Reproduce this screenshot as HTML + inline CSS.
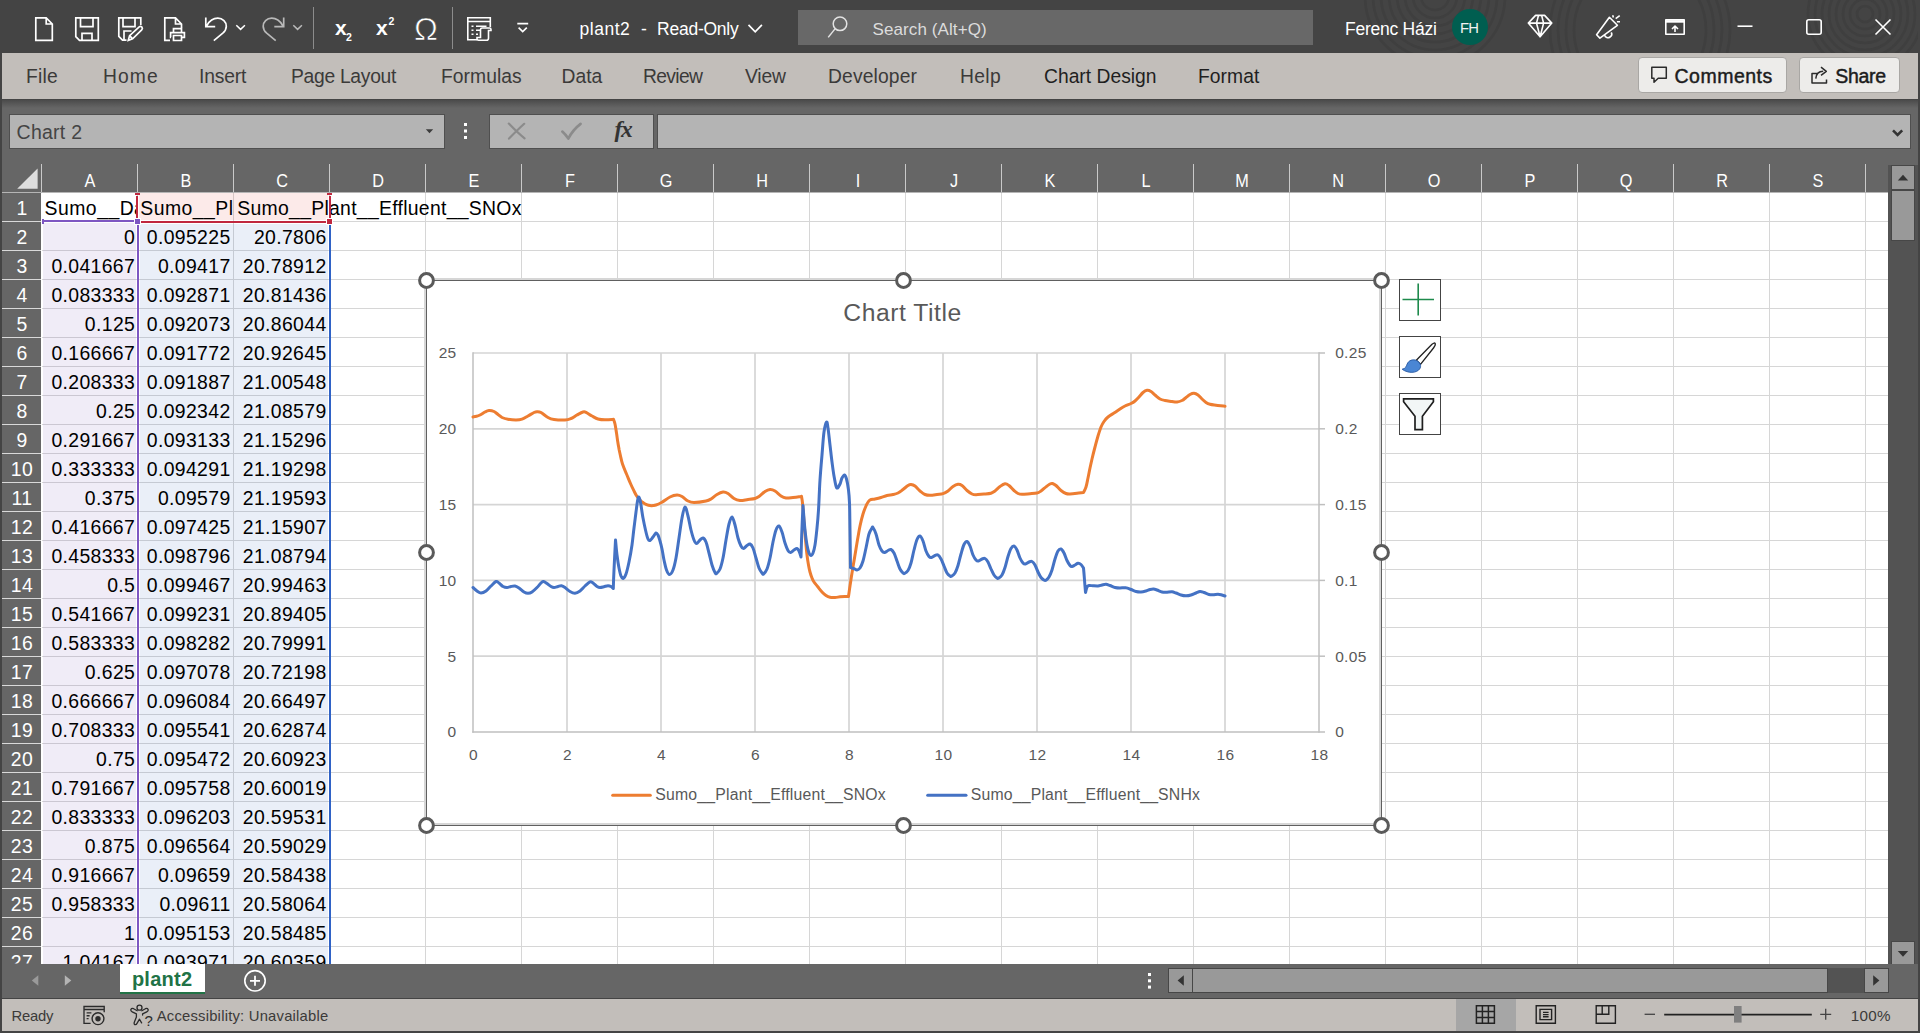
<!DOCTYPE html>
<html lang="en"><head><meta charset="utf-8"><title>plant2 - Read-Only - Excel</title>
<style>
*{margin:0;padding:0;box-sizing:border-box}
html,body{width:1920px;height:1033px;overflow:hidden;background:#666}
body{position:relative;font-family:"Liberation Sans",sans-serif;color:#000}
.a{position:absolute}
.t{position:absolute;white-space:pre;line-height:1em;display:block}
svg{position:absolute;overflow:visible}
#titlebar{left:0;top:0;width:1920px;height:53px;background:#444}
#ribbon{left:2px;top:53px;width:1916px;height:46px;background:#c2beba}
#ribshadow{left:2px;top:99px;width:1916px;height:9px;background:linear-gradient(#404040,#4c4c4c 15%,#666)}
.edge{background:#444}
.box{background:#b4b4b4;border:1px solid #4f4f4f}
.btn{background:#edecea;border:1px solid #a9a7a4;border-radius:4px}
#sheet{left:42px;top:193px;width:1846px;height:771px;background:#fff;overflow:hidden}
#grid{left:0;top:0;width:1846px;height:771px;
 background-image:linear-gradient(90deg,transparent 95px,#d6d6d6 95px),linear-gradient(transparent 28px,#d6d6d6 28px);
 background-size:96px 29px,96px 29px}
#colhdr{left:2px;top:164px;width:1886px;height:29px;background:#666;overflow:hidden}
#rowhdr{left:2px;top:193px;width:39px;height:771px;background:#666;overflow:hidden;border-right:0}
#rowgap{left:41px;top:193px;width:1px;height:771px;background:#fff}
.csep{position:absolute;top:0;width:1px;height:28px;background:#c9c9c9}
.rsep{position:absolute;left:0;width:39px;height:1px;background:#d9d9d9}
#tabbar{left:2px;top:964px;width:1916px;height:34px;background:#666}
#status{left:2px;top:999px;width:1916px;height:32px;background:#c2beba}
.sb{background:#999;border:1px solid #474747}
#chart{left:426px;top:280px;width:956px;height:546px;background:#fff;border:1px solid #606060}
#chartglow{left:424px;top:278px;width:957px;height:547px;border:2px solid #d6d6d6}
.cbtn{position:absolute;left:1399px;width:42px;height:42px;background:#fff;border:1px solid #444}

</style></head>
<body>
<div id="titlebar" class="a"></div>
<svg class="a" style="left:30px;top:10px" width="230" height="36" viewBox="30 10 230 36" fill="none" stroke="#fff" stroke-width="1.7" stroke-linejoin="miter"><path d="M35.8 17.8H46.2L52.3 24V40.3H35.8Z M46.2 17.8V24H52.3"/><path d="M75.8 17.8H98.3V40.3H79.5L75.8 36.6Z M80.5 17.8V26.6H93V17.8 M82 40.3V33.4H92V40.3"/><path d="M140.8 25V17.8H118.8V36.4L122.5 40.2H126.5 M123 17.8V26.6H135V17.8 M124 39.5V31H131.5"/><path d="M128.3 40.3L129.6 35.6L139.2 26.8Q140.6 25.7 141.9 27.1Q143 28.5 141.7 29.8L132.6 38.8Z M129.6 35.6L132.6 38.8"/><path d="M170 40.3H164.8V17.8H175.5L181.5 24V28 M175.5 17.8V24H181.5"/><path d="M173.5 32.5V28.6H181.5V32.5 M171 37.3H170.6V32.6H184.4V37.3H182 M173.5 35.5H181.5V40.5H173.5Z"/><path d="M205.8 17.5V26.6H215.2 M206.8 25.6C209.5 20.8 213.5 18.2 217.8 18.2C222.8 18.2 226.3 21.8 226.3 26.2C226.3 29.2 225 31.3 222.8 33.2L213.8 40.6"/><path d="M236.3 25.2L240.6 29.4L244.9 25.2" stroke-width="1.5"/></svg>
<svg class="a" style="left:260px;top:10px" width="50" height="36" viewBox="260 10 50 36" fill="none" stroke="#b9b9b9" stroke-width="1.7"><path d="M283.7 17.5V26.6H274.3 M282.7 25.6C280 20.8 276 18.2 271.7 18.2C266.7 18.2 263.2 21.8 263.2 26.2C263.2 29.2 264.5 31.3 266.7 33.2L275.7 40.6"/><path d="M293.3 25.2L297.6 29.4L301.9 25.2" stroke-width="1.5"/></svg>
<div class="a" style="left:313px;top:7px;width:1px;height:42px;background:#8c8c8c"></div>
<div class="a" style="left:452px;top:7px;width:1px;height:42px;background:#8c8c8c"></div>
<span id="t0" class="t " style="left:335.00px;top:17.00px;font-size:21px;color:#fff;font-weight:700;letter-spacing:0.000px;">x</span>
<span id="t1" class="t " style="left:346.00px;top:32.00px;font-size:10.5px;color:#fff;font-weight:700;letter-spacing:0.000px;">2</span>
<span id="t2" class="t " style="left:376.00px;top:17.00px;font-size:21px;color:#fff;font-weight:700;letter-spacing:0.000px;">x</span>
<span id="t3" class="t " style="left:388.50px;top:16.00px;font-size:10.5px;color:#fff;font-weight:700;letter-spacing:0.000px;">2</span>
<span id="t4" class="t " style="left:414.00px;top:13.00px;font-size:32px;color:#fff;font-weight:400;letter-spacing:0.000px;-webkit-text-stroke:0.7px #444;">Ω</span>
<svg class="a" style="left:460px;top:10px" width="75" height="36" viewBox="460 10 75 36" fill="none" stroke="#fff" stroke-width="1.6"><path d="M477 39.8H467.8V17.8H490.3V27 M467.8 21.5H490.3 M471.5 26.2H473.5 M476 26.2H486.5 M471.5 30.2H473.5 M476 30.2H480 M471.5 34.2H473.5 M476 34.2H478"/><path d="M480.5 37.5V29.6Q480.5 28 482.2 28H489.6Q491 28 491 29.5V30.5H488.5V38.2Q488.5 40.2 486.5 40.2H478.5Q477 40.2 477 38.8V37.5Z"/><path d="M517.3 23.6H528.2 M518.6 27.6L522.7 31.6L526.8 27.6" stroke-width="1.6"/></svg>
<span id="t5" class="t " style="left:579.50px;top:21.00px;font-size:17.5px;color:#fff;font-weight:400;letter-spacing:0.510px;">plant2</span>
<span id="t6" class="t " style="left:641.00px;top:21.00px;font-size:17.5px;color:#fff;font-weight:400;letter-spacing:0.000px;">-</span>
<span id="t7" class="t " style="left:657.00px;top:21.00px;font-size:17.5px;color:#fff;font-weight:400;letter-spacing:-0.237px;">Read-Only</span>
<svg class="a" style="left:745px;top:20px" width="20" height="16" viewBox="745 20 20 16" fill="none" ><path d="M748.5 24.8L755.2 31.8L761.9 24.8" stroke="#fff" stroke-width="1.7"/></svg>
<div class="a" style="left:798px;top:10px;width:515px;height:35px;background:#686868"></div>
<svg class="a" style="left:825px;top:14px" width="26" height="26" viewBox="825 14 26 26" fill="none" ><circle cx="840" cy="23.8" r="6.8" stroke="#e3e3e3" stroke-width="1.5"/><path d="M835 28.9L828.2 37.4" stroke="#e3e3e3" stroke-width="1.5"/></svg>
<span id="t8" class="t " style="left:872.50px;top:21.00px;font-size:17px;color:#dcdcdc;font-weight:400;letter-spacing:0.097px;">Search (Alt+Q)</span>
<svg class="a" style="left:1316px;top:0;overflow:hidden" width="604" height="53" viewBox="1316 0 604 53" fill="none" stroke="#3f3f3f" stroke-width="2.6"><circle cx="1435" cy="-4" r="14"/><circle cx="1435" cy="-4" r="22"/><circle cx="1435" cy="-4" r="30"/><circle cx="1435" cy="-4" r="38"/><circle cx="1435" cy="-4" r="46"/><circle cx="1435" cy="-4" r="54"/><circle cx="1435" cy="-4" r="62"/><circle cx="1435" cy="-4" r="70"/><circle cx="1640" cy="30" r="66"/><circle cx="1640" cy="30" r="74"/><circle cx="1640" cy="30" r="82"/><circle cx="1640" cy="30" r="90"/><circle cx="1865" cy="14" r="8"/><circle cx="1865" cy="14" r="15"/><circle cx="1865" cy="14" r="22"/><circle cx="1865" cy="14" r="29"/><circle cx="1865" cy="14" r="36"/><circle cx="1865" cy="14" r="43"/><circle cx="1865" cy="14" r="50"/><circle cx="1865" cy="14" r="57"/></svg>
<span id="t9" class="t " style="left:1345.00px;top:21.00px;font-size:17.5px;color:#fff;font-weight:400;letter-spacing:-0.245px;">Ferenc Házi</span>
<div class="a" style="left:1452px;top:9px;width:36px;height:36px;border-radius:50%;background:#005e50"></div>
<span id="t10" class="t " style="left:1459.90px;top:21.00px;font-size:14.8px;color:#f1f1f1;font-weight:400;letter-spacing:-0.639px;">FH</span>
<svg class="a" style="left:1520px;top:8px" width="400" height="36" viewBox="1520 8 400 36" fill="none" stroke="#fff" stroke-width="1.6" stroke-linejoin="round"><path d="M1535.6 15.4H1544.6L1551.8 23.1L1540.1 36.8L1528.3 23.1Z M1528.3 23.1H1551.8 M1538.5 15.4L1536.5 23.1L1540.1 36.8L1543.6 23.1L1541.6 15.4"/><path d="M1596.6 34.8L1609.4 17.3L1617.4 25.3L1599.9 38.1Z M1604.6 35C1605.2 37.6 1608 38.4 1610 37C1611.8 35.8 1612 33.6 1611.3 32.3"/><path d="M1612.7 15.2L1613.4 17.5 M1615.7 18.7L1619.7 15.6 M1616.9 21.7L1620 21.8"/><path d="M1665.8 19.8H1684.2V34.2H1665.8Z M1675 32V26.4 M1672 29L1675 26L1678 29"/><path d="M1665.8 21.4H1684.2" stroke-width="2.6"/><path d="M1737.5 26.2H1752.5"/><rect x="1806.8" y="19.8" width="14.4" height="14.4" rx="2"/><path d="M1875.5 19.5L1890.5 34.5 M1890.5 19.5L1875.5 34.5"/></svg>
<div id="ribbon" class="a"></div><div id="ribshadow" class="a"></div>
<span id="t11" class="t " style="left:26.00px;top:67.00px;font-size:19.3px;color:#3b3a39;font-weight:400;letter-spacing:0.218px;">File</span>
<span id="t12" class="t " style="left:103.00px;top:67.00px;font-size:19.3px;color:#3b3a39;font-weight:400;letter-spacing:1.097px;">Home</span>
<span id="t13" class="t " style="left:199.00px;top:67.00px;font-size:19.3px;color:#3b3a39;font-weight:400;letter-spacing:-0.173px;">Insert</span>
<span id="t14" class="t " style="left:291.00px;top:67.00px;font-size:19.3px;color:#3b3a39;font-weight:400;letter-spacing:-0.292px;">Page Layout</span>
<span id="t15" class="t " style="left:441.00px;top:67.00px;font-size:19.3px;color:#3b3a39;font-weight:400;letter-spacing:0.041px;">Formulas</span>
<span id="t16" class="t " style="left:561.50px;top:67.00px;font-size:19.3px;color:#3b3a39;font-weight:400;letter-spacing:-0.002px;">Data</span>
<span id="t17" class="t " style="left:643.00px;top:67.00px;font-size:19.3px;color:#3b3a39;font-weight:400;letter-spacing:-0.659px;">Review</span>
<span id="t18" class="t " style="left:745.00px;top:67.00px;font-size:19.3px;color:#3b3a39;font-weight:400;letter-spacing:-0.173px;">View</span>
<span id="t19" class="t " style="left:828.00px;top:67.00px;font-size:19.3px;color:#3b3a39;font-weight:400;letter-spacing:0.129px;">Developer</span>
<span id="t20" class="t " style="left:960.00px;top:67.00px;font-size:19.3px;color:#3b3a39;font-weight:400;letter-spacing:0.356px;">Help</span>
<span id="t21" class="t " style="left:1044.00px;top:67.00px;font-size:19.3px;color:#1f1f1f;font-weight:400;letter-spacing:-0.000px;">Chart Design</span>
<span id="t22" class="t " style="left:1198.00px;top:67.00px;font-size:19.3px;color:#1f1f1f;font-weight:400;letter-spacing:0.059px;">Format</span>
<div class="a btn" style="left:1638px;top:57px;width:149px;height:36px"></div>
<div class="a btn" style="left:1799px;top:57px;width:101px;height:36px"></div>
<svg class="a" style="left:1648px;top:64px" width="22" height="22" viewBox="1648 64 22 22" fill="none" ><path d="M1651.8 67.3H1666.3V78.3H1658.2L1654 82.2V78.3H1651.8Z" stroke="#2b2b2b" stroke-width="1.5" stroke-linejoin="round"/></svg>
<span id="t23" class="t " style="left:1674.50px;top:67.00px;font-size:19.5px;color:#1c1c1c;font-weight:400;letter-spacing:0.497px;-webkit-text-stroke:0.45px #1c1c1c;">Comments</span>
<svg class="a" style="left:1808px;top:64px" width="24" height="24" viewBox="1808 64 24 24" fill="none" ><path d="M1817.5 73.4H1812V83H1826.5V79.5 M1815.8 78.6C1816.2 73.6 1819 71.3 1823.2 71.2 M1821 67.2L1826.3 71.3L1821 75.4" stroke="#2b2b2b" stroke-width="1.5" stroke-linejoin="round"/></svg>
<span id="t24" class="t " style="left:1835.30px;top:67.00px;font-size:19.5px;color:#1c1c1c;font-weight:400;letter-spacing:-0.297px;-webkit-text-stroke:0.45px #1c1c1c;">Share</span>
<div class="a box" style="left:9px;top:114px;width:436px;height:35px"></div>
<span id="t25" class="t " style="left:16.60px;top:123.00px;font-size:19.5px;color:#444;font-weight:400;letter-spacing:0.250px;">Chart 2</span>
<svg class="a" style="left:424px;top:127px" width="12" height="8" viewBox="424 127 12 8" fill="none" ><path d="M425.8 129.2H433.2L429.5 133.2Z" fill="#3c3c3c"/></svg>
<div class="a" style="left:464px;top:123px;width:3px;height:3px;background:#fff;box-shadow:0 6.5px 0 #fff,0 13px 0 #fff"></div>
<div class="a box" style="left:489px;top:114px;width:165px;height:35px"></div>
<svg class="a" style="left:505px;top:120px" width="80" height="22" viewBox="505 120 80 22" fill="none" ><path d="M508.8 123.6C513 128 519 134 524.6 138.4 M524.2 123.8C519 128.5 514 133.5 509 138.6" stroke="#8b8b8b" stroke-width="2.2" stroke-linecap="round"/><path d="M562.3 131.6C564.5 133.5 566.5 136 568.3 138.6C571.5 132.5 575.5 127.8 580.6 123.9" stroke="#8b8b8b" stroke-width="2.6" stroke-linecap="round" stroke-linejoin="round"/></svg>
<span id="t26" class="t " style="left:614.50px;top:118.00px;font-size:23.5px;color:#333;font-weight:700;letter-spacing:-1.326px;font-family:'Liberation Serif',serif;font-style:italic;">fx</span>
<div class="a box" style="left:657px;top:114px;width:1254px;height:35px"></div>
<svg class="a" style="left:1890px;top:126px" width="16" height="14" viewBox="1890 126 16 14" fill="none" ><path d="M1893 130.3L1897.6 134.9L1902.2 130.3" stroke="#333" stroke-width="2.6"/></svg>
<div class="a edge" style="left:0;top:0;width:2px;height:1033px"></div><div class="a edge" style="left:1918px;top:0;width:2px;height:1033px"></div><div class="a edge" style="left:0;top:1031px;width:1920px;height:2px"></div>
<div id="colhdr" class="a"><i class="csep" style="left:39px"></i><i class="csep" style="left:135px"></i><i class="csep" style="left:231px"></i><i class="csep" style="left:327px"></i><i class="csep" style="left:423px"></i><i class="csep" style="left:519px"></i><i class="csep" style="left:615px"></i><i class="csep" style="left:711px"></i><i class="csep" style="left:807px"></i><i class="csep" style="left:903px"></i><i class="csep" style="left:999px"></i><i class="csep" style="left:1095px"></i><i class="csep" style="left:1191px"></i><i class="csep" style="left:1287px"></i><i class="csep" style="left:1383px"></i><i class="csep" style="left:1479px"></i><i class="csep" style="left:1575px"></i><i class="csep" style="left:1671px"></i><i class="csep" style="left:1767px"></i><i class="csep" style="left:1863px"></i><i class="a" style="left:0;top:28px;width:1886px;height:1px;background:#b5b5b5"></i></div>
<svg class="a" style="left:15px;top:166px" width="26" height="26" viewBox="15 166 26 26" fill="none" ><path d="M37.6 168.4V188.8H17.2Z" fill="#dedede"/></svg>
<span class="t" style="left:30.10px;top:172.00px;width:120px;text-align:center;font-size:18.7px;color:#fff;font-weight:400;letter-spacing:0.000px;transform:scaleX(.87);">A</span>
<span class="t" style="left:126.10px;top:172.00px;width:120px;text-align:center;font-size:18.7px;color:#fff;font-weight:400;letter-spacing:0.000px;transform:scaleX(.87);">B</span>
<span class="t" style="left:222.10px;top:172.00px;width:120px;text-align:center;font-size:18.7px;color:#fff;font-weight:400;letter-spacing:0.000px;transform:scaleX(.87);">C</span>
<span class="t" style="left:318.10px;top:172.00px;width:120px;text-align:center;font-size:18.7px;color:#fff;font-weight:400;letter-spacing:0.000px;transform:scaleX(.87);">D</span>
<span class="t" style="left:414.10px;top:172.00px;width:120px;text-align:center;font-size:18.7px;color:#fff;font-weight:400;letter-spacing:0.000px;transform:scaleX(.87);">E</span>
<span class="t" style="left:510.10px;top:172.00px;width:120px;text-align:center;font-size:18.7px;color:#fff;font-weight:400;letter-spacing:0.000px;transform:scaleX(.87);">F</span>
<span class="t" style="left:606.10px;top:172.00px;width:120px;text-align:center;font-size:18.7px;color:#fff;font-weight:400;letter-spacing:0.000px;transform:scaleX(.87);">G</span>
<span class="t" style="left:702.10px;top:172.00px;width:120px;text-align:center;font-size:18.7px;color:#fff;font-weight:400;letter-spacing:0.000px;transform:scaleX(.87);">H</span>
<span class="t" style="left:798.10px;top:172.00px;width:120px;text-align:center;font-size:18.7px;color:#fff;font-weight:400;letter-spacing:0.000px;transform:scaleX(.87);">I</span>
<span class="t" style="left:894.10px;top:172.00px;width:120px;text-align:center;font-size:18.7px;color:#fff;font-weight:400;letter-spacing:0.000px;transform:scaleX(.87);">J</span>
<span class="t" style="left:990.10px;top:172.00px;width:120px;text-align:center;font-size:18.7px;color:#fff;font-weight:400;letter-spacing:0.000px;transform:scaleX(.87);">K</span>
<span class="t" style="left:1086.10px;top:172.00px;width:120px;text-align:center;font-size:18.7px;color:#fff;font-weight:400;letter-spacing:0.000px;transform:scaleX(.87);">L</span>
<span class="t" style="left:1182.10px;top:172.00px;width:120px;text-align:center;font-size:18.7px;color:#fff;font-weight:400;letter-spacing:0.000px;transform:scaleX(.87);">M</span>
<span class="t" style="left:1278.10px;top:172.00px;width:120px;text-align:center;font-size:18.7px;color:#fff;font-weight:400;letter-spacing:0.000px;transform:scaleX(.87);">N</span>
<span class="t" style="left:1374.10px;top:172.00px;width:120px;text-align:center;font-size:18.7px;color:#fff;font-weight:400;letter-spacing:0.000px;transform:scaleX(.87);">O</span>
<span class="t" style="left:1470.10px;top:172.00px;width:120px;text-align:center;font-size:18.7px;color:#fff;font-weight:400;letter-spacing:0.000px;transform:scaleX(.87);">P</span>
<span class="t" style="left:1566.10px;top:172.00px;width:120px;text-align:center;font-size:18.7px;color:#fff;font-weight:400;letter-spacing:0.000px;transform:scaleX(.87);">Q</span>
<span class="t" style="left:1662.10px;top:172.00px;width:120px;text-align:center;font-size:18.7px;color:#fff;font-weight:400;letter-spacing:0.000px;transform:scaleX(.87);">R</span>
<span class="t" style="left:1758.10px;top:172.00px;width:120px;text-align:center;font-size:18.7px;color:#fff;font-weight:400;letter-spacing:0.000px;transform:scaleX(.87);">S</span>
<div id="rowhdr" class="a"><i class="rsep" style="top:28px"></i><i class="rsep" style="top:57px"></i><i class="rsep" style="top:86px"></i><i class="rsep" style="top:115px"></i><i class="rsep" style="top:144px"></i><i class="rsep" style="top:173px"></i><i class="rsep" style="top:202px"></i><i class="rsep" style="top:231px"></i><i class="rsep" style="top:260px"></i><i class="rsep" style="top:289px"></i><i class="rsep" style="top:318px"></i><i class="rsep" style="top:347px"></i><i class="rsep" style="top:376px"></i><i class="rsep" style="top:405px"></i><i class="rsep" style="top:434px"></i><i class="rsep" style="top:463px"></i><i class="rsep" style="top:492px"></i><i class="rsep" style="top:521px"></i><i class="rsep" style="top:550px"></i><i class="rsep" style="top:579px"></i><i class="rsep" style="top:608px"></i><i class="rsep" style="top:637px"></i><i class="rsep" style="top:666px"></i><i class="rsep" style="top:695px"></i><i class="rsep" style="top:724px"></i><i class="rsep" style="top:753px"></i><i class="rsep" style="top:782px"></i></div><div id="rowgap" class="a"></div>
<span class="t" style="left:-38.02px;top:199.00px;width:120px;text-align:center;font-size:19.4px;color:#fff;font-weight:400;letter-spacing:0.360px;clip-path:inset(0 0 0px 0);">1</span>
<span class="t" style="left:-38.02px;top:228.00px;width:120px;text-align:center;font-size:19.4px;color:#fff;font-weight:400;letter-spacing:0.360px;clip-path:inset(0 0 0px 0);">2</span>
<span class="t" style="left:-38.02px;top:257.00px;width:120px;text-align:center;font-size:19.4px;color:#fff;font-weight:400;letter-spacing:0.360px;clip-path:inset(0 0 0px 0);">3</span>
<span class="t" style="left:-38.02px;top:286.00px;width:120px;text-align:center;font-size:19.4px;color:#fff;font-weight:400;letter-spacing:0.360px;clip-path:inset(0 0 0px 0);">4</span>
<span class="t" style="left:-38.02px;top:315.00px;width:120px;text-align:center;font-size:19.4px;color:#fff;font-weight:400;letter-spacing:0.360px;clip-path:inset(0 0 0px 0);">5</span>
<span class="t" style="left:-38.02px;top:344.00px;width:120px;text-align:center;font-size:19.4px;color:#fff;font-weight:400;letter-spacing:0.360px;clip-path:inset(0 0 0px 0);">6</span>
<span class="t" style="left:-38.02px;top:373.00px;width:120px;text-align:center;font-size:19.4px;color:#fff;font-weight:400;letter-spacing:0.360px;clip-path:inset(0 0 0px 0);">7</span>
<span class="t" style="left:-38.02px;top:402.00px;width:120px;text-align:center;font-size:19.4px;color:#fff;font-weight:400;letter-spacing:0.360px;clip-path:inset(0 0 0px 0);">8</span>
<span class="t" style="left:-38.02px;top:431.00px;width:120px;text-align:center;font-size:19.4px;color:#fff;font-weight:400;letter-spacing:0.360px;clip-path:inset(0 0 0px 0);">9</span>
<span class="t" style="left:-38.02px;top:460.00px;width:120px;text-align:center;font-size:19.4px;color:#fff;font-weight:400;letter-spacing:0.360px;clip-path:inset(0 0 0px 0);">10</span>
<span class="t" style="left:-38.02px;top:489.00px;width:120px;text-align:center;font-size:19.4px;color:#fff;font-weight:400;letter-spacing:0.360px;clip-path:inset(0 0 0px 0);">11</span>
<span class="t" style="left:-38.02px;top:518.00px;width:120px;text-align:center;font-size:19.4px;color:#fff;font-weight:400;letter-spacing:0.360px;clip-path:inset(0 0 0px 0);">12</span>
<span class="t" style="left:-38.02px;top:547.00px;width:120px;text-align:center;font-size:19.4px;color:#fff;font-weight:400;letter-spacing:0.360px;clip-path:inset(0 0 0px 0);">13</span>
<span class="t" style="left:-38.02px;top:576.00px;width:120px;text-align:center;font-size:19.4px;color:#fff;font-weight:400;letter-spacing:0.360px;clip-path:inset(0 0 0px 0);">14</span>
<span class="t" style="left:-38.02px;top:605.00px;width:120px;text-align:center;font-size:19.4px;color:#fff;font-weight:400;letter-spacing:0.360px;clip-path:inset(0 0 0px 0);">15</span>
<span class="t" style="left:-38.02px;top:634.00px;width:120px;text-align:center;font-size:19.4px;color:#fff;font-weight:400;letter-spacing:0.360px;clip-path:inset(0 0 0px 0);">16</span>
<span class="t" style="left:-38.02px;top:663.00px;width:120px;text-align:center;font-size:19.4px;color:#fff;font-weight:400;letter-spacing:0.360px;clip-path:inset(0 0 0px 0);">17</span>
<span class="t" style="left:-38.02px;top:692.00px;width:120px;text-align:center;font-size:19.4px;color:#fff;font-weight:400;letter-spacing:0.360px;clip-path:inset(0 0 0px 0);">18</span>
<span class="t" style="left:-38.02px;top:721.00px;width:120px;text-align:center;font-size:19.4px;color:#fff;font-weight:400;letter-spacing:0.360px;clip-path:inset(0 0 0px 0);">19</span>
<span class="t" style="left:-38.02px;top:750.00px;width:120px;text-align:center;font-size:19.4px;color:#fff;font-weight:400;letter-spacing:0.360px;clip-path:inset(0 0 0px 0);">20</span>
<span class="t" style="left:-38.02px;top:779.00px;width:120px;text-align:center;font-size:19.4px;color:#fff;font-weight:400;letter-spacing:0.360px;clip-path:inset(0 0 0px 0);">21</span>
<span class="t" style="left:-38.02px;top:808.00px;width:120px;text-align:center;font-size:19.4px;color:#fff;font-weight:400;letter-spacing:0.360px;clip-path:inset(0 0 0px 0);">22</span>
<span class="t" style="left:-38.02px;top:837.00px;width:120px;text-align:center;font-size:19.4px;color:#fff;font-weight:400;letter-spacing:0.360px;clip-path:inset(0 0 0px 0);">23</span>
<span class="t" style="left:-38.02px;top:866.00px;width:120px;text-align:center;font-size:19.4px;color:#fff;font-weight:400;letter-spacing:0.360px;clip-path:inset(0 0 0px 0);">24</span>
<span class="t" style="left:-38.02px;top:895.00px;width:120px;text-align:center;font-size:19.4px;color:#fff;font-weight:400;letter-spacing:0.360px;clip-path:inset(0 0 0px 0);">25</span>
<span class="t" style="left:-38.02px;top:924.00px;width:120px;text-align:center;font-size:19.4px;color:#fff;font-weight:400;letter-spacing:0.360px;clip-path:inset(0 0 0px 0);">26</span>
<span class="t" style="left:-38.02px;top:953.00px;width:120px;text-align:center;font-size:19.4px;color:#fff;font-weight:400;letter-spacing:0.360px;clip-path:inset(0 0 9px 0);">27</span>
<div id="sheet" class="a"><div id="grid" class="a"></div><div class="a" style="left:1px;top:30px;width:93px;height:741px;background:rgba(112,72,180,.10)"></div><div class="a" style="left:98px;top:31px;width:188px;height:740px;background:rgba(68,114,196,.115)"></div><div class="a" style="left:97px;top:0;width:189px;height:27px;background:rgba(225,70,60,.115)"></div><span class="t" style="left:-106.84px;top:35.00px;width:200px;text-align:right;font-size:19.4px;color:#000;font-weight:400;letter-spacing:0.360px;">0</span><span class="t" style="left:-11.44px;top:35.00px;width:200px;text-align:right;font-size:19.4px;color:#000;font-weight:400;letter-spacing:0.360px;">0.095225</span><span class="t" style="left:84.56px;top:35.00px;width:200px;text-align:right;font-size:19.4px;color:#000;font-weight:400;letter-spacing:0.360px;">20.7806</span><span class="t" style="left:-106.84px;top:64.00px;width:200px;text-align:right;font-size:19.4px;color:#000;font-weight:400;letter-spacing:0.360px;">0.041667</span><span class="t" style="left:-11.44px;top:64.00px;width:200px;text-align:right;font-size:19.4px;color:#000;font-weight:400;letter-spacing:0.360px;">0.09417</span><span class="t" style="left:84.56px;top:64.00px;width:200px;text-align:right;font-size:19.4px;color:#000;font-weight:400;letter-spacing:0.360px;">20.78912</span><span class="t" style="left:-106.84px;top:93.00px;width:200px;text-align:right;font-size:19.4px;color:#000;font-weight:400;letter-spacing:0.360px;">0.083333</span><span class="t" style="left:-11.44px;top:93.00px;width:200px;text-align:right;font-size:19.4px;color:#000;font-weight:400;letter-spacing:0.360px;">0.092871</span><span class="t" style="left:84.56px;top:93.00px;width:200px;text-align:right;font-size:19.4px;color:#000;font-weight:400;letter-spacing:0.360px;">20.81436</span><span class="t" style="left:-106.84px;top:122.00px;width:200px;text-align:right;font-size:19.4px;color:#000;font-weight:400;letter-spacing:0.360px;">0.125</span><span class="t" style="left:-11.44px;top:122.00px;width:200px;text-align:right;font-size:19.4px;color:#000;font-weight:400;letter-spacing:0.360px;">0.092073</span><span class="t" style="left:84.56px;top:122.00px;width:200px;text-align:right;font-size:19.4px;color:#000;font-weight:400;letter-spacing:0.360px;">20.86044</span><span class="t" style="left:-106.84px;top:151.00px;width:200px;text-align:right;font-size:19.4px;color:#000;font-weight:400;letter-spacing:0.360px;">0.166667</span><span class="t" style="left:-11.44px;top:151.00px;width:200px;text-align:right;font-size:19.4px;color:#000;font-weight:400;letter-spacing:0.360px;">0.091772</span><span class="t" style="left:84.56px;top:151.00px;width:200px;text-align:right;font-size:19.4px;color:#000;font-weight:400;letter-spacing:0.360px;">20.92645</span><span class="t" style="left:-106.84px;top:180.00px;width:200px;text-align:right;font-size:19.4px;color:#000;font-weight:400;letter-spacing:0.360px;">0.208333</span><span class="t" style="left:-11.44px;top:180.00px;width:200px;text-align:right;font-size:19.4px;color:#000;font-weight:400;letter-spacing:0.360px;">0.091887</span><span class="t" style="left:84.56px;top:180.00px;width:200px;text-align:right;font-size:19.4px;color:#000;font-weight:400;letter-spacing:0.360px;">21.00548</span><span class="t" style="left:-106.84px;top:209.00px;width:200px;text-align:right;font-size:19.4px;color:#000;font-weight:400;letter-spacing:0.360px;">0.25</span><span class="t" style="left:-11.44px;top:209.00px;width:200px;text-align:right;font-size:19.4px;color:#000;font-weight:400;letter-spacing:0.360px;">0.092342</span><span class="t" style="left:84.56px;top:209.00px;width:200px;text-align:right;font-size:19.4px;color:#000;font-weight:400;letter-spacing:0.360px;">21.08579</span><span class="t" style="left:-106.84px;top:238.00px;width:200px;text-align:right;font-size:19.4px;color:#000;font-weight:400;letter-spacing:0.360px;">0.291667</span><span class="t" style="left:-11.44px;top:238.00px;width:200px;text-align:right;font-size:19.4px;color:#000;font-weight:400;letter-spacing:0.360px;">0.093133</span><span class="t" style="left:84.56px;top:238.00px;width:200px;text-align:right;font-size:19.4px;color:#000;font-weight:400;letter-spacing:0.360px;">21.15296</span><span class="t" style="left:-106.84px;top:267.00px;width:200px;text-align:right;font-size:19.4px;color:#000;font-weight:400;letter-spacing:0.360px;">0.333333</span><span class="t" style="left:-11.44px;top:267.00px;width:200px;text-align:right;font-size:19.4px;color:#000;font-weight:400;letter-spacing:0.360px;">0.094291</span><span class="t" style="left:84.56px;top:267.00px;width:200px;text-align:right;font-size:19.4px;color:#000;font-weight:400;letter-spacing:0.360px;">21.19298</span><span class="t" style="left:-106.84px;top:296.00px;width:200px;text-align:right;font-size:19.4px;color:#000;font-weight:400;letter-spacing:0.360px;">0.375</span><span class="t" style="left:-11.44px;top:296.00px;width:200px;text-align:right;font-size:19.4px;color:#000;font-weight:400;letter-spacing:0.360px;">0.09579</span><span class="t" style="left:84.56px;top:296.00px;width:200px;text-align:right;font-size:19.4px;color:#000;font-weight:400;letter-spacing:0.360px;">21.19593</span><span class="t" style="left:-106.84px;top:325.00px;width:200px;text-align:right;font-size:19.4px;color:#000;font-weight:400;letter-spacing:0.360px;">0.416667</span><span class="t" style="left:-11.44px;top:325.00px;width:200px;text-align:right;font-size:19.4px;color:#000;font-weight:400;letter-spacing:0.360px;">0.097425</span><span class="t" style="left:84.56px;top:325.00px;width:200px;text-align:right;font-size:19.4px;color:#000;font-weight:400;letter-spacing:0.360px;">21.15907</span><span class="t" style="left:-106.84px;top:354.00px;width:200px;text-align:right;font-size:19.4px;color:#000;font-weight:400;letter-spacing:0.360px;">0.458333</span><span class="t" style="left:-11.44px;top:354.00px;width:200px;text-align:right;font-size:19.4px;color:#000;font-weight:400;letter-spacing:0.360px;">0.098796</span><span class="t" style="left:84.56px;top:354.00px;width:200px;text-align:right;font-size:19.4px;color:#000;font-weight:400;letter-spacing:0.360px;">21.08794</span><span class="t" style="left:-106.84px;top:383.00px;width:200px;text-align:right;font-size:19.4px;color:#000;font-weight:400;letter-spacing:0.360px;">0.5</span><span class="t" style="left:-11.44px;top:383.00px;width:200px;text-align:right;font-size:19.4px;color:#000;font-weight:400;letter-spacing:0.360px;">0.099467</span><span class="t" style="left:84.56px;top:383.00px;width:200px;text-align:right;font-size:19.4px;color:#000;font-weight:400;letter-spacing:0.360px;">20.99463</span><span class="t" style="left:-106.84px;top:412.00px;width:200px;text-align:right;font-size:19.4px;color:#000;font-weight:400;letter-spacing:0.360px;">0.541667</span><span class="t" style="left:-11.44px;top:412.00px;width:200px;text-align:right;font-size:19.4px;color:#000;font-weight:400;letter-spacing:0.360px;">0.099231</span><span class="t" style="left:84.56px;top:412.00px;width:200px;text-align:right;font-size:19.4px;color:#000;font-weight:400;letter-spacing:0.360px;">20.89405</span><span class="t" style="left:-106.84px;top:441.00px;width:200px;text-align:right;font-size:19.4px;color:#000;font-weight:400;letter-spacing:0.360px;">0.583333</span><span class="t" style="left:-11.44px;top:441.00px;width:200px;text-align:right;font-size:19.4px;color:#000;font-weight:400;letter-spacing:0.360px;">0.098282</span><span class="t" style="left:84.56px;top:441.00px;width:200px;text-align:right;font-size:19.4px;color:#000;font-weight:400;letter-spacing:0.360px;">20.79991</span><span class="t" style="left:-106.84px;top:470.00px;width:200px;text-align:right;font-size:19.4px;color:#000;font-weight:400;letter-spacing:0.360px;">0.625</span><span class="t" style="left:-11.44px;top:470.00px;width:200px;text-align:right;font-size:19.4px;color:#000;font-weight:400;letter-spacing:0.360px;">0.097078</span><span class="t" style="left:84.56px;top:470.00px;width:200px;text-align:right;font-size:19.4px;color:#000;font-weight:400;letter-spacing:0.360px;">20.72198</span><span class="t" style="left:-106.84px;top:499.00px;width:200px;text-align:right;font-size:19.4px;color:#000;font-weight:400;letter-spacing:0.360px;">0.666667</span><span class="t" style="left:-11.44px;top:499.00px;width:200px;text-align:right;font-size:19.4px;color:#000;font-weight:400;letter-spacing:0.360px;">0.096084</span><span class="t" style="left:84.56px;top:499.00px;width:200px;text-align:right;font-size:19.4px;color:#000;font-weight:400;letter-spacing:0.360px;">20.66497</span><span class="t" style="left:-106.84px;top:528.00px;width:200px;text-align:right;font-size:19.4px;color:#000;font-weight:400;letter-spacing:0.360px;">0.708333</span><span class="t" style="left:-11.44px;top:528.00px;width:200px;text-align:right;font-size:19.4px;color:#000;font-weight:400;letter-spacing:0.360px;">0.095541</span><span class="t" style="left:84.56px;top:528.00px;width:200px;text-align:right;font-size:19.4px;color:#000;font-weight:400;letter-spacing:0.360px;">20.62874</span><span class="t" style="left:-106.84px;top:557.00px;width:200px;text-align:right;font-size:19.4px;color:#000;font-weight:400;letter-spacing:0.360px;">0.75</span><span class="t" style="left:-11.44px;top:557.00px;width:200px;text-align:right;font-size:19.4px;color:#000;font-weight:400;letter-spacing:0.360px;">0.095472</span><span class="t" style="left:84.56px;top:557.00px;width:200px;text-align:right;font-size:19.4px;color:#000;font-weight:400;letter-spacing:0.360px;">20.60923</span><span class="t" style="left:-106.84px;top:586.00px;width:200px;text-align:right;font-size:19.4px;color:#000;font-weight:400;letter-spacing:0.360px;">0.791667</span><span class="t" style="left:-11.44px;top:586.00px;width:200px;text-align:right;font-size:19.4px;color:#000;font-weight:400;letter-spacing:0.360px;">0.095758</span><span class="t" style="left:84.56px;top:586.00px;width:200px;text-align:right;font-size:19.4px;color:#000;font-weight:400;letter-spacing:0.360px;">20.60019</span><span class="t" style="left:-106.84px;top:615.00px;width:200px;text-align:right;font-size:19.4px;color:#000;font-weight:400;letter-spacing:0.360px;">0.833333</span><span class="t" style="left:-11.44px;top:615.00px;width:200px;text-align:right;font-size:19.4px;color:#000;font-weight:400;letter-spacing:0.360px;">0.096203</span><span class="t" style="left:84.56px;top:615.00px;width:200px;text-align:right;font-size:19.4px;color:#000;font-weight:400;letter-spacing:0.360px;">20.59531</span><span class="t" style="left:-106.84px;top:644.00px;width:200px;text-align:right;font-size:19.4px;color:#000;font-weight:400;letter-spacing:0.360px;">0.875</span><span class="t" style="left:-11.44px;top:644.00px;width:200px;text-align:right;font-size:19.4px;color:#000;font-weight:400;letter-spacing:0.360px;">0.096564</span><span class="t" style="left:84.56px;top:644.00px;width:200px;text-align:right;font-size:19.4px;color:#000;font-weight:400;letter-spacing:0.360px;">20.59029</span><span class="t" style="left:-106.84px;top:673.00px;width:200px;text-align:right;font-size:19.4px;color:#000;font-weight:400;letter-spacing:0.360px;">0.916667</span><span class="t" style="left:-11.44px;top:673.00px;width:200px;text-align:right;font-size:19.4px;color:#000;font-weight:400;letter-spacing:0.360px;">0.09659</span><span class="t" style="left:84.56px;top:673.00px;width:200px;text-align:right;font-size:19.4px;color:#000;font-weight:400;letter-spacing:0.360px;">20.58438</span><span class="t" style="left:-106.84px;top:702.00px;width:200px;text-align:right;font-size:19.4px;color:#000;font-weight:400;letter-spacing:0.360px;">0.958333</span><span class="t" style="left:-11.44px;top:702.00px;width:200px;text-align:right;font-size:19.4px;color:#000;font-weight:400;letter-spacing:0.360px;">0.09611</span><span class="t" style="left:84.56px;top:702.00px;width:200px;text-align:right;font-size:19.4px;color:#000;font-weight:400;letter-spacing:0.360px;">20.58064</span><span class="t" style="left:-106.84px;top:731.00px;width:200px;text-align:right;font-size:19.4px;color:#000;font-weight:400;letter-spacing:0.360px;">1</span><span class="t" style="left:-11.44px;top:731.00px;width:200px;text-align:right;font-size:19.4px;color:#000;font-weight:400;letter-spacing:0.360px;">0.095153</span><span class="t" style="left:84.56px;top:731.00px;width:200px;text-align:right;font-size:19.4px;color:#000;font-weight:400;letter-spacing:0.360px;">20.58485</span><span class="t" style="left:-106.84px;top:760.00px;width:200px;text-align:right;font-size:19.4px;color:#000;font-weight:400;letter-spacing:0.360px;">1.04167</span><span class="t" style="left:-11.44px;top:760.00px;width:200px;text-align:right;font-size:19.4px;color:#000;font-weight:400;letter-spacing:0.360px;">0.093971</span><span class="t" style="left:84.56px;top:760.00px;width:200px;text-align:right;font-size:19.4px;color:#000;font-weight:400;letter-spacing:0.360px;">20.60359</span><div class="a" style="left:0;top:0;width:95px;height:28px;overflow:hidden"><span class="t" style="left:2.60px;top:6.00px;font-size:19.4px;color:#000;font-weight:400;letter-spacing:0.470px;">Sumo__Days</span></div><div class="a" style="left:96px;top:0;width:96px;height:28px;overflow:hidden"><span class="t" style="left:2.30px;top:6.00px;font-size:19.4px;color:#000;font-weight:400;letter-spacing:0.470px;">Sumo__Plant__Effluent__SNHx</span></div><span id="t27" class="t " style="left:195.30px;top:6.00px;font-size:19.4px;color:#000;font-weight:400;letter-spacing:0.285px;">Sumo__Plant__Effluent__SNOx</span><div class="a" style="left:0;top:27px;width:92px;height:2px;background:#7e57c2"></div><div class="a" style="left:0;top:26px;width:2px;height:5px;background:#7e57c2"></div><div class="a" style="left:95px;top:32px;width:2px;height:739px;background:#7e57c2"></div><div class="a" style="left:94px;top:3px;width:2px;height:22px;background:#c0283f"></div><div class="a" style="left:93px;top:0;width:5px;height:2px;background:#c0283f"></div><div class="a" style="left:99px;top:28px;width:185px;height:2px;background:#c0283f"></div><div class="a" style="left:287px;top:3px;width:2px;height:22px;background:#c0283f"></div><div class="a" style="left:285px;top:0;width:5px;height:2px;background:#c0283f"></div><div class="a" style="left:93px;top:26px;width:5px;height:5px;background:#7e57c2;box-shadow:0 0 0 1px #fff"></div><div class="a" style="left:285px;top:26px;width:5px;height:5px;background:#c0283f;box-shadow:0 0 0 1px #fff"></div><div class="a" style="left:287px;top:32px;width:2px;height:739px;background:#2f62c6"></div></div>
<div id="chart" class="a"></div><div id="chartglow" class="a"></div>
<svg class="a" style="left:426px;top:280px" width="956" height="546" viewBox="426 280 956 546" fill="none" ><path d="M473 353.0H1319" stroke="#d5d5d5" stroke-width="1.7"/><path d="M473 428.8H1319" stroke="#d5d5d5" stroke-width="1.7"/><path d="M473 504.6H1319" stroke="#d5d5d5" stroke-width="1.7"/><path d="M473 580.4H1319" stroke="#d5d5d5" stroke-width="1.7"/><path d="M473 656.2H1319" stroke="#d5d5d5" stroke-width="1.7"/><path d="M567 353V732" stroke="#d5d5d5" stroke-width="1.7"/><path d="M661 353V732" stroke="#d5d5d5" stroke-width="1.7"/><path d="M755 353V732" stroke="#d5d5d5" stroke-width="1.7"/><path d="M849 353V732" stroke="#d5d5d5" stroke-width="1.7"/><path d="M943 353V732" stroke="#d5d5d5" stroke-width="1.7"/><path d="M1037 353V732" stroke="#d5d5d5" stroke-width="1.7"/><path d="M1131 353V732" stroke="#d5d5d5" stroke-width="1.7"/><path d="M1225 353V732" stroke="#d5d5d5" stroke-width="1.7"/><path d="M473 352.3V732.7" stroke="#bfbfbf" stroke-width="1.5"/><path d="M472.3 732H1325" stroke="#bfbfbf" stroke-width="1.5"/><path d="M1319 352.3V732.7" stroke="#bfbfbf" stroke-width="1.5"/><path d="M1319 353.0H1325" stroke="#bfbfbf" stroke-width="1.5"/><path d="M1319 428.8H1325" stroke="#bfbfbf" stroke-width="1.5"/><path d="M1319 504.6H1325" stroke="#bfbfbf" stroke-width="1.5"/><path d="M1319 580.4H1325" stroke="#bfbfbf" stroke-width="1.5"/><path d="M1319 656.2H1325" stroke="#bfbfbf" stroke-width="1.5"/><path d="M473.0 416.9C473.6 416.8 475.3 416.6 476.5 416.3C477.7 416.0 478.6 415.7 480.0 415.0C481.4 414.3 483.5 412.8 485.0 412.0C486.5 411.2 487.5 410.6 489.0 410.5C490.5 410.4 492.5 410.8 494.0 411.5C495.5 412.2 496.7 413.5 498.0 414.5C499.3 415.5 500.3 416.7 502.0 417.5C503.7 418.3 505.7 418.9 508.0 419.3C510.3 419.7 513.7 420.0 516.0 420.0C518.3 420.0 520.0 419.9 522.0 419.2C524.0 418.5 526.0 417.1 528.0 416.0C530.0 414.9 532.5 413.2 534.0 412.5C535.5 411.8 535.8 411.7 537.0 411.7C538.2 411.7 539.2 411.5 541.0 412.5C542.8 413.5 545.8 416.3 548.0 417.5C550.2 418.7 551.2 419.1 554.0 419.5C556.8 419.9 562.2 420.2 565.0 420.0C567.8 419.8 569.0 419.3 571.0 418.5C573.0 417.7 575.0 416.1 577.0 415.0C579.0 413.9 581.5 412.4 583.0 412.0C584.5 411.6 584.5 411.6 586.0 412.3C587.5 413.0 590.0 414.9 592.0 416.0C594.0 417.1 595.8 418.4 598.0 419.0C600.2 419.6 602.4 419.8 605.0 419.8C607.6 419.9 612.1 419.4 613.5 419.3C613.8 420.1 614.5 421.7 615.0 424.0C615.5 426.3 616.0 430.0 616.5 433.0C617.0 436.0 617.3 439.2 617.8 442.0C618.2 444.8 618.8 447.7 619.2 450.0C619.7 452.3 620.0 453.7 620.5 456.0C621.0 458.3 621.5 461.0 622.5 464.0C623.5 467.0 625.1 470.7 626.5 474.0C627.9 477.3 629.4 481.0 630.7 484.0C632.0 487.0 633.5 489.9 634.5 492.0C635.5 494.1 636.1 495.2 637.0 496.5C637.9 497.8 639.0 499.0 640.0 500.0C641.0 501.0 642.0 501.9 643.0 502.6C644.0 503.3 644.8 503.9 646.0 504.4C647.2 504.9 648.3 505.5 650.0 505.6C651.7 505.7 654.0 505.6 656.0 505.0C658.0 504.4 659.7 503.5 662.0 502.2C664.3 500.9 667.5 498.2 670.0 497.0C672.5 495.8 675.0 495.1 677.0 495.0C679.0 494.9 680.2 495.5 682.0 496.5C683.8 497.5 686.0 500.0 688.0 501.0C690.0 502.0 691.0 502.5 694.0 502.5C697.0 502.5 703.2 501.6 706.0 501.0C708.8 500.4 709.2 500.1 711.0 499.0C712.8 497.9 715.0 495.7 717.0 494.5C719.0 493.3 721.2 492.2 723.0 492.0C724.8 491.8 726.2 492.4 728.0 493.5C729.8 494.6 732.0 497.3 734.0 498.5C736.0 499.7 737.7 500.3 740.0 500.5C742.3 500.7 745.5 499.8 748.0 499.5C750.5 499.2 753.2 499.0 755.0 498.5C756.8 498.0 757.3 497.7 759.0 496.5C760.7 495.3 763.2 492.7 765.0 491.5C766.8 490.3 768.3 489.6 770.0 489.5C771.7 489.4 773.2 489.9 775.0 491.0C776.8 492.1 779.2 494.8 781.0 496.0C782.8 497.2 784.0 497.8 786.0 498.0C788.0 498.2 790.8 497.7 793.0 497.5C795.2 497.3 797.6 497.0 799.0 496.8C800.4 496.6 801.1 496.4 801.5 496.3C801.7 497.4 802.2 499.9 802.5 503.0C802.8 506.1 803.2 510.8 803.5 515.0C803.8 519.2 804.1 523.0 804.5 528.0C804.9 533.0 805.6 540.5 806.0 545.0C806.4 549.5 806.6 551.7 807.0 555.0C807.4 558.3 808.0 562.2 808.5 565.0C809.0 567.8 809.4 569.8 810.0 572.0C810.6 574.2 811.3 576.3 812.0 578.0C812.7 579.7 813.0 580.5 814.0 582.0C815.0 583.5 816.7 585.3 818.0 587.0C819.3 588.7 820.7 590.6 822.0 592.0C823.3 593.4 824.7 594.6 826.0 595.5C827.3 596.4 828.5 597.0 830.0 597.3C831.5 597.6 833.3 597.6 835.0 597.5C836.7 597.4 838.3 597.0 840.0 596.8C841.7 596.6 843.6 596.5 845.0 596.5C846.4 596.5 847.9 596.5 848.5 596.5C848.8 594.8 849.4 589.9 850.0 586.0C850.6 582.1 851.3 577.2 852.0 573.0C852.7 568.8 853.3 565.0 854.0 561.0C854.7 557.0 855.3 553.0 856.0 549.0C856.7 545.0 857.3 540.8 858.0 537.0C858.7 533.2 859.2 529.8 860.0 526.0C860.8 522.2 862.0 517.3 863.0 514.0C864.0 510.7 865.2 507.8 866.0 506.0C866.8 504.2 866.8 504.0 867.5 503.0C868.2 502.0 868.8 500.7 870.0 500.0C871.2 499.3 873.2 499.4 875.0 499.0C876.8 498.6 879.0 498.1 881.0 497.5C883.0 496.9 885.0 496.0 887.0 495.5C889.0 495.0 891.2 494.9 893.0 494.5C894.8 494.1 896.3 493.8 898.0 493.0C899.7 492.2 901.3 490.8 903.0 489.5C904.7 488.2 906.7 486.3 908.0 485.5C909.3 484.7 909.8 484.4 911.0 484.5C912.2 484.6 913.5 484.9 915.0 486.0C916.5 487.1 918.3 489.6 920.0 491.0C921.7 492.4 923.3 493.8 925.0 494.5C926.7 495.2 928.0 495.3 930.0 495.3C932.0 495.3 934.8 494.8 937.0 494.5C939.2 494.2 941.2 494.3 943.0 493.7C944.8 493.1 946.3 492.2 948.0 491.0C949.7 489.8 951.3 487.6 953.0 486.5C954.7 485.4 956.5 484.5 958.0 484.3C959.5 484.1 960.5 484.5 962.0 485.5C963.5 486.5 965.3 489.1 967.0 490.5C968.7 491.9 970.5 493.3 972.0 494.0C973.5 494.7 974.0 494.7 976.0 494.7C978.0 494.7 981.5 494.2 984.0 494.0C986.5 493.8 989.2 493.7 991.0 493.2C992.8 492.7 993.5 492.1 995.0 491.0C996.5 489.9 998.3 487.7 1000.0 486.5C1001.7 485.3 1003.5 484.0 1005.0 483.8C1006.5 483.6 1007.5 484.4 1009.0 485.5C1010.5 486.6 1012.5 489.2 1014.0 490.5C1015.5 491.8 1016.7 492.9 1018.0 493.5C1019.3 494.1 1020.0 494.3 1022.0 494.3C1024.0 494.3 1027.5 493.9 1030.0 493.7C1032.5 493.5 1035.2 493.4 1037.0 493.0C1038.8 492.6 1039.5 492.0 1041.0 491.0C1042.5 490.0 1044.5 488.0 1046.0 486.8C1047.5 485.6 1048.9 484.6 1050.0 484.0C1051.1 483.4 1051.5 483.2 1052.5 483.5C1053.5 483.8 1054.6 484.3 1056.0 485.5C1057.4 486.7 1059.3 489.2 1061.0 490.5C1062.7 491.8 1064.5 492.9 1066.0 493.5C1067.5 494.1 1068.2 494.0 1070.0 494.0C1071.8 494.0 1074.8 493.6 1077.0 493.3C1079.2 493.1 1082.4 492.6 1083.5 492.5C1083.9 491.6 1085.2 489.4 1086.0 487.0C1086.8 484.6 1087.3 481.2 1088.0 478.0C1088.7 474.8 1089.3 471.2 1090.0 468.0C1090.7 464.8 1091.2 462.5 1092.0 459.0C1092.8 455.5 1094.0 450.8 1095.0 447.0C1096.0 443.2 1097.0 439.3 1098.0 436.0C1099.0 432.7 1100.0 429.4 1101.0 427.0C1102.0 424.6 1102.8 423.2 1104.0 421.5C1105.2 419.8 1106.3 418.4 1108.0 417.0C1109.7 415.6 1112.0 414.3 1114.0 413.0C1116.0 411.7 1118.2 410.2 1120.0 409.0C1121.8 407.8 1123.2 406.9 1125.0 406.0C1126.8 405.1 1129.3 404.3 1131.0 403.5C1132.7 402.7 1133.7 402.1 1135.0 401.0C1136.3 399.9 1137.7 398.4 1139.0 397.0C1140.3 395.6 1141.7 393.6 1143.0 392.5C1144.3 391.4 1145.7 390.5 1147.0 390.3C1148.3 390.1 1149.7 390.7 1151.0 391.5C1152.3 392.3 1153.5 393.8 1155.0 395.0C1156.5 396.2 1158.3 398.1 1160.0 399.0C1161.7 399.9 1163.0 400.1 1165.0 400.5C1167.0 400.9 1170.0 401.2 1172.0 401.5C1174.0 401.8 1175.3 402.2 1177.0 402.0C1178.7 401.8 1180.5 401.2 1182.0 400.5C1183.5 399.8 1184.7 398.5 1186.0 397.5C1187.3 396.5 1188.7 395.2 1190.0 394.5C1191.3 393.8 1192.7 393.2 1194.0 393.3C1195.3 393.4 1196.7 394.1 1198.0 395.0C1199.3 395.9 1200.7 397.8 1202.0 399.0C1203.3 400.2 1204.7 401.6 1206.0 402.5C1207.3 403.4 1208.3 403.9 1210.0 404.3C1211.7 404.8 1213.5 404.9 1216.0 405.2C1218.5 405.5 1223.5 406.0 1225.0 406.2" stroke="#ed7d31" stroke-width="3" stroke-linejoin="round" stroke-linecap="round"/><path d="M473.0 587.5C473.7 588.1 475.7 590.1 477.0 591.0C478.3 591.9 479.5 593.0 481.0 593.0C482.5 593.0 484.3 592.2 486.0 591.0C487.7 589.8 489.3 587.6 491.0 586.0C492.7 584.4 494.7 582.0 496.0 581.5C497.3 581.0 497.8 582.2 499.0 583.0C500.2 583.8 501.7 585.8 503.0 586.5C504.3 587.2 505.7 587.5 507.0 587.5C508.3 587.5 509.7 586.8 511.0 586.5C512.3 586.2 513.7 585.8 515.0 586.0C516.3 586.2 517.5 587.0 519.0 588.0C520.5 589.0 522.5 591.1 524.0 592.0C525.5 592.9 526.7 593.3 528.0 593.3C529.3 593.3 530.5 593.0 532.0 592.0C533.5 591.0 535.5 589.0 537.0 587.5C538.5 586.0 539.9 584.0 541.0 583.0C542.1 582.0 542.5 581.4 543.5 581.5C544.5 581.6 545.8 582.7 547.0 583.5C548.2 584.3 549.8 585.8 551.0 586.5C552.2 587.2 552.8 587.5 554.0 587.5C555.2 587.5 556.8 586.8 558.0 586.5C559.2 586.2 560.3 585.6 561.5 585.8C562.7 586.0 563.6 586.5 565.0 587.5C566.4 588.5 568.3 590.5 570.0 591.5C571.7 592.5 573.3 593.4 575.0 593.3C576.7 593.2 578.3 592.2 580.0 591.0C581.7 589.8 583.3 587.5 585.0 586.0C586.7 584.5 588.7 582.3 590.0 581.8C591.3 581.3 591.8 582.2 593.0 583.0C594.2 583.8 595.8 585.8 597.0 586.5C598.2 587.2 598.8 587.5 600.0 587.5C601.2 587.5 602.7 587.0 604.0 586.7C605.3 586.4 606.8 585.7 608.0 585.7C609.2 585.7 610.1 586.0 611.0 586.5C611.9 587.0 612.9 588.2 613.3 588.5C613.4 585.4 613.6 578.1 614.0 570.0C614.4 561.9 615.2 545.0 615.5 540.0C615.8 542.5 616.4 550.3 617.0 555.0C617.6 559.7 618.3 564.5 619.0 568.0C619.7 571.5 620.3 574.2 621.0 576.0C621.7 577.8 622.2 578.8 623.0 578.5C623.8 578.2 625.0 576.8 626.0 574.0C627.0 571.2 628.0 566.8 629.0 562.0C630.0 557.2 631.2 550.7 632.0 545.0C632.8 539.3 633.3 533.5 634.0 528.0C634.7 522.5 635.4 516.5 636.0 512.0C636.6 507.5 637.1 503.5 637.5 501.0C637.9 498.5 638.1 497.3 638.5 497.0C638.9 496.7 639.3 497.7 639.7 499.0C640.1 500.3 640.5 501.8 641.0 505.0C641.5 508.2 642.2 513.8 643.0 518.0C643.8 522.2 644.7 526.5 645.5 530.0C646.3 533.5 647.2 537.2 648.0 539.0C648.8 540.8 649.2 540.8 650.0 540.5C650.8 540.2 652.0 538.2 653.0 537.0C654.0 535.8 655.2 533.3 656.0 533.0C656.8 532.7 657.3 533.7 658.0 535.0C658.7 536.3 659.3 538.7 660.0 541.0C660.7 543.3 661.3 545.8 662.0 549.0C662.7 552.2 663.2 556.5 664.0 560.0C664.8 563.5 665.6 567.6 666.5 570.0C667.4 572.4 668.4 574.5 669.5 574.5C670.6 574.5 671.9 572.8 673.0 570.0C674.1 567.2 675.0 563.3 676.0 558.0C677.0 552.7 678.0 544.7 679.0 538.0C680.0 531.3 681.0 523.2 682.0 518.0C683.0 512.8 684.0 507.3 685.0 507.0C686.0 506.7 687.0 512.2 688.0 516.0C689.0 519.8 690.0 526.0 691.0 530.0C692.0 534.0 693.1 537.8 694.0 540.0C694.9 542.2 695.5 543.5 696.5 543.5C697.5 543.5 698.9 540.9 700.0 540.0C701.1 539.1 702.0 537.7 703.0 538.0C704.0 538.3 705.0 539.5 706.0 542.0C707.0 544.5 708.0 549.2 709.0 553.0C710.0 556.8 711.0 561.8 712.0 565.0C713.0 568.2 714.2 571.1 715.0 572.5C715.8 573.9 715.7 574.1 716.5 573.5C717.3 572.9 718.9 571.6 720.0 569.0C721.1 566.4 722.0 562.8 723.0 558.0C724.0 553.2 725.0 545.7 726.0 540.0C727.0 534.3 728.0 527.8 729.0 524.0C730.0 520.2 731.0 516.8 732.0 517.0C733.0 517.2 734.0 521.5 735.0 525.0C736.0 528.5 737.0 534.5 738.0 538.0C739.0 541.5 740.1 544.2 741.0 546.0C741.9 547.8 742.5 548.6 743.5 548.5C744.5 548.4 745.9 546.2 747.0 545.5C748.1 544.8 749.0 543.6 750.0 544.0C751.0 544.4 752.0 545.7 753.0 548.0C754.0 550.3 755.0 554.7 756.0 558.0C757.0 561.3 758.0 565.5 759.0 568.0C760.0 570.5 761.2 572.0 762.0 573.0C762.8 574.0 762.7 574.7 763.5 574.0C764.3 573.3 765.9 571.7 767.0 569.0C768.1 566.3 769.0 562.5 770.0 558.0C771.0 553.5 772.0 546.7 773.0 542.0C774.0 537.3 775.0 532.7 776.0 530.0C777.0 527.3 778.0 525.7 779.0 526.0C780.0 526.3 781.0 529.2 782.0 532.0C783.0 534.8 784.0 539.9 785.0 543.0C786.0 546.1 787.1 548.9 788.0 550.5C788.9 552.1 789.5 552.6 790.5 552.5C791.5 552.4 792.9 550.7 794.0 550.0C795.1 549.3 796.2 548.3 797.0 548.5C797.8 548.7 798.3 549.6 799.0 551.0C799.7 552.4 800.7 556.0 801.0 557.0C801.1 553.3 801.4 543.6 801.7 535.0C802.0 526.4 802.8 510.4 803.0 505.5C803.3 509.6 804.3 523.4 805.0 530.0C805.7 536.6 806.3 541.2 807.0 545.0C807.7 548.8 808.3 551.2 809.0 553.0C809.7 554.8 810.3 555.5 811.0 555.5C811.7 555.5 812.3 554.8 813.0 553.0C813.7 551.2 814.3 549.2 815.0 545.0C815.7 540.8 816.4 533.8 817.0 528.0C817.6 522.2 818.0 518.0 818.5 510.0C819.0 502.0 819.4 489.2 820.0 480.0C820.6 470.8 821.3 463.0 822.0 455.0C822.7 447.0 823.2 437.5 824.0 432.0C824.8 426.5 825.8 422.7 826.5 422.0C827.2 421.3 827.4 424.2 828.0 428.0C828.6 431.8 829.3 439.3 830.0 445.0C830.7 450.7 831.3 456.8 832.0 462.0C832.7 467.2 833.3 472.0 834.0 476.0C834.7 480.0 835.4 484.0 836.0 486.0C836.6 488.0 836.8 488.3 837.5 488.0C838.2 487.7 839.2 485.7 840.0 484.0C840.8 482.3 841.2 479.5 842.0 478.0C842.8 476.5 843.8 474.8 844.5 475.0C845.2 475.2 845.8 476.5 846.5 479.0C847.2 481.5 848.0 486.0 848.5 490.0C849.0 494.0 849.2 496.3 849.5 503.0C849.8 509.7 849.8 519.2 850.0 530.0C850.2 540.8 850.4 561.2 850.5 567.5C851.1 567.7 852.9 568.3 854.0 568.7C855.1 569.1 856.0 570.1 857.0 570.0C858.0 569.9 859.0 569.5 860.0 568.0C861.0 566.5 862.0 564.3 863.0 561.0C864.0 557.7 865.0 552.5 866.0 548.0C867.0 543.5 868.0 537.3 869.0 534.0C870.0 530.7 871.3 529.1 872.0 528.0C872.7 526.9 872.3 526.5 873.0 527.5C873.7 528.5 875.0 531.1 876.0 534.0C877.0 536.9 878.0 542.2 879.0 545.0C880.0 547.8 881.1 549.8 882.0 551.0C882.9 552.2 883.5 552.6 884.5 552.5C885.5 552.4 886.9 551.0 888.0 550.5C889.1 550.0 890.0 549.1 891.0 549.5C892.0 549.9 893.0 551.1 894.0 553.0C895.0 554.9 896.0 558.3 897.0 561.0C898.0 563.7 899.0 567.0 900.0 569.0C901.0 571.0 902.2 572.2 903.0 573.0C903.8 573.8 903.7 573.9 904.5 573.5C905.3 573.1 906.9 572.2 908.0 570.5C909.1 568.8 910.0 566.4 911.0 563.0C912.0 559.6 913.0 553.9 914.0 550.0C915.0 546.1 916.0 541.8 917.0 539.5C918.0 537.2 919.0 535.8 920.0 536.0C921.0 536.2 922.0 538.5 923.0 541.0C924.0 543.5 925.0 548.4 926.0 551.0C927.0 553.6 928.1 555.4 929.0 556.5C929.9 557.6 930.5 557.7 931.5 557.5C932.5 557.3 933.9 555.9 935.0 555.5C936.1 555.1 937.0 554.4 938.0 555.0C939.0 555.6 940.0 557.2 941.0 559.0C942.0 560.8 943.0 563.7 944.0 566.0C945.0 568.3 946.0 571.3 947.0 573.0C948.0 574.7 949.2 575.5 950.0 576.0C950.8 576.5 950.7 576.8 951.5 576.3C952.3 575.8 953.9 574.8 955.0 573.0C956.1 571.2 957.0 568.7 958.0 565.5C959.0 562.3 960.0 557.5 961.0 554.0C962.0 550.5 963.0 546.6 964.0 544.5C965.0 542.4 966.0 541.2 967.0 541.5C968.0 541.8 969.0 543.8 970.0 546.0C971.0 548.2 972.0 552.7 973.0 555.0C974.0 557.3 975.1 559.0 976.0 560.0C976.9 561.0 977.5 561.2 978.5 561.0C979.5 560.8 980.9 559.4 982.0 559.0C983.1 558.6 984.0 558.0 985.0 558.5C986.0 559.0 987.0 560.2 988.0 562.0C989.0 563.8 990.0 566.8 991.0 569.0C992.0 571.2 993.0 573.5 994.0 575.0C995.0 576.5 996.2 577.5 997.0 578.0C997.8 578.5 997.7 578.8 998.5 578.3C999.3 577.8 1000.9 576.8 1002.0 575.0C1003.1 573.2 1004.0 570.6 1005.0 567.5C1006.0 564.4 1007.0 559.7 1008.0 556.5C1009.0 553.3 1010.0 550.2 1011.0 548.5C1012.0 546.8 1013.0 545.8 1014.0 546.0C1015.0 546.2 1016.0 548.0 1017.0 550.0C1018.0 552.0 1019.0 555.8 1020.0 558.0C1021.0 560.2 1022.1 562.0 1023.0 563.0C1023.9 564.0 1024.5 564.2 1025.5 564.0C1026.5 563.8 1027.9 562.4 1029.0 562.0C1030.1 561.6 1031.0 561.0 1032.0 561.5C1033.0 562.0 1034.0 563.2 1035.0 565.0C1036.0 566.8 1037.0 569.9 1038.0 572.0C1039.0 574.1 1040.0 576.2 1041.0 577.5C1042.0 578.8 1043.2 579.5 1044.0 580.0C1044.8 580.5 1045.2 580.7 1046.0 580.2C1046.8 579.7 1048.0 578.7 1049.0 577.0C1050.0 575.3 1051.0 573.0 1052.0 570.0C1053.0 567.0 1054.0 562.2 1055.0 559.0C1056.0 555.8 1057.0 552.7 1058.0 551.0C1059.0 549.3 1060.0 548.7 1061.0 549.0C1062.0 549.3 1063.0 551.1 1064.0 553.0C1065.0 554.9 1066.0 558.4 1067.0 560.5C1068.0 562.6 1069.2 564.5 1070.0 565.5C1070.8 566.5 1071.2 566.6 1072.0 566.5C1072.8 566.4 1074.0 565.5 1075.0 565.0C1076.0 564.5 1077.0 563.4 1078.0 563.3C1079.0 563.2 1080.1 563.7 1081.0 564.5C1081.9 565.3 1083.1 567.4 1083.5 568.0C1083.7 570.0 1084.2 575.9 1084.5 580.0C1084.8 584.1 1085.3 590.4 1085.5 592.5C1085.8 591.6 1086.4 588.2 1087.0 587.0C1087.6 585.8 1088.0 585.7 1089.0 585.5C1090.0 585.3 1091.5 585.7 1093.0 585.8C1094.5 585.9 1096.5 586.1 1098.0 586.0C1099.5 585.9 1100.7 585.3 1102.0 585.0C1103.3 584.7 1104.7 584.2 1106.0 584.3C1107.3 584.4 1108.5 585.0 1110.0 585.5C1111.5 586.0 1113.3 587.1 1115.0 587.5C1116.7 587.9 1118.2 588.0 1120.0 588.0C1121.8 588.0 1124.2 587.5 1126.0 587.8C1127.8 588.0 1129.3 588.9 1131.0 589.5C1132.7 590.1 1134.3 591.1 1136.0 591.5C1137.7 591.9 1139.3 592.1 1141.0 592.0C1142.7 591.9 1144.5 591.4 1146.0 591.0C1147.5 590.6 1148.8 589.8 1150.0 589.5C1151.2 589.2 1152.3 588.9 1153.5 589.0C1154.7 589.1 1155.6 589.5 1157.0 590.0C1158.4 590.5 1160.5 591.6 1162.0 592.0C1163.5 592.4 1164.3 592.3 1166.0 592.3C1167.7 592.3 1170.3 591.7 1172.0 591.8C1173.7 591.9 1174.5 592.5 1176.0 593.0C1177.5 593.5 1179.3 594.5 1181.0 595.0C1182.7 595.5 1184.3 595.8 1186.0 595.8C1187.7 595.8 1189.3 595.5 1191.0 595.0C1192.7 594.5 1194.5 593.6 1196.0 593.0C1197.5 592.4 1198.7 591.6 1200.0 591.5C1201.3 591.4 1202.5 592.0 1204.0 592.5C1205.5 593.0 1207.5 594.1 1209.0 594.5C1210.5 594.9 1211.5 594.8 1213.0 594.8C1214.5 594.8 1216.5 594.2 1218.0 594.2C1219.5 594.2 1220.8 594.7 1222.0 595.0C1223.2 595.3 1224.5 595.8 1225.0 596.0" stroke="#4472c4" stroke-width="3" stroke-linejoin="round" stroke-linecap="round"/><path d="M612.7 795.3H650.3" stroke="#ed7d31" stroke-width="3" stroke-linecap="round"/><path d="M927.7 795.3H966" stroke="#4472c4" stroke-width="3" stroke-linecap="round"/></svg>
<span class="t" style="left:256.50px;top:345.00px;width:200px;text-align:right;font-size:15.5px;color:#595959;font-weight:400;letter-spacing:0.300px;">25</span>
<span class="t" style="left:256.50px;top:421.00px;width:200px;text-align:right;font-size:15.5px;color:#595959;font-weight:400;letter-spacing:0.300px;">20</span>
<span class="t" style="left:256.50px;top:497.00px;width:200px;text-align:right;font-size:15.5px;color:#595959;font-weight:400;letter-spacing:0.300px;">15</span>
<span class="t" style="left:256.50px;top:573.00px;width:200px;text-align:right;font-size:15.5px;color:#595959;font-weight:400;letter-spacing:0.300px;">10</span>
<span class="t" style="left:256.50px;top:649.00px;width:200px;text-align:right;font-size:15.5px;color:#595959;font-weight:400;letter-spacing:0.300px;">5</span>
<span class="t" style="left:256.50px;top:724.00px;width:200px;text-align:right;font-size:15.5px;color:#595959;font-weight:400;letter-spacing:0.300px;">0</span>
<span class="t" style="left:1335.20px;top:345.00px;font-size:15.5px;color:#595959;font-weight:400;letter-spacing:0.300px;">0.25</span>
<span class="t" style="left:1335.20px;top:421.00px;font-size:15.5px;color:#595959;font-weight:400;letter-spacing:0.300px;">0.2</span>
<span class="t" style="left:1335.20px;top:497.00px;font-size:15.5px;color:#595959;font-weight:400;letter-spacing:0.300px;">0.15</span>
<span class="t" style="left:1335.20px;top:573.00px;font-size:15.5px;color:#595959;font-weight:400;letter-spacing:0.300px;">0.1</span>
<span class="t" style="left:1335.20px;top:649.00px;font-size:15.5px;color:#595959;font-weight:400;letter-spacing:0.300px;">0.05</span>
<span class="t" style="left:1335.20px;top:724.00px;font-size:15.5px;color:#595959;font-weight:400;letter-spacing:0.300px;">0</span>
<span class="t" style="left:413.45px;top:747.00px;width:120px;text-align:center;font-size:15.5px;color:#595959;font-weight:400;letter-spacing:0.300px;">0</span>
<span class="t" style="left:507.45px;top:747.00px;width:120px;text-align:center;font-size:15.5px;color:#595959;font-weight:400;letter-spacing:0.300px;">2</span>
<span class="t" style="left:601.45px;top:747.00px;width:120px;text-align:center;font-size:15.5px;color:#595959;font-weight:400;letter-spacing:0.300px;">4</span>
<span class="t" style="left:695.45px;top:747.00px;width:120px;text-align:center;font-size:15.5px;color:#595959;font-weight:400;letter-spacing:0.300px;">6</span>
<span class="t" style="left:789.45px;top:747.00px;width:120px;text-align:center;font-size:15.5px;color:#595959;font-weight:400;letter-spacing:0.300px;">8</span>
<span class="t" style="left:883.45px;top:747.00px;width:120px;text-align:center;font-size:15.5px;color:#595959;font-weight:400;letter-spacing:0.300px;">10</span>
<span class="t" style="left:977.45px;top:747.00px;width:120px;text-align:center;font-size:15.5px;color:#595959;font-weight:400;letter-spacing:0.300px;">12</span>
<span class="t" style="left:1071.45px;top:747.00px;width:120px;text-align:center;font-size:15.5px;color:#595959;font-weight:400;letter-spacing:0.300px;">14</span>
<span class="t" style="left:1165.45px;top:747.00px;width:120px;text-align:center;font-size:15.5px;color:#595959;font-weight:400;letter-spacing:0.300px;">16</span>
<span class="t" style="left:1259.45px;top:747.00px;width:120px;text-align:center;font-size:15.5px;color:#595959;font-weight:400;letter-spacing:0.300px;">18</span>
<span id="t28" class="t " style="left:843.30px;top:301.00px;font-size:24.7px;color:#595959;font-weight:400;letter-spacing:0.548px;">Chart Title</span>
<span id="t29" class="t " style="left:655.30px;top:787.00px;font-size:15.8px;color:#595959;font-weight:400;letter-spacing:0.192px;">Sumo__Plant__Effluent__SNOx</span>
<span id="t30" class="t " style="left:970.80px;top:787.00px;font-size:15.8px;color:#595959;font-weight:400;letter-spacing:0.176px;">Sumo__Plant__Effluent__SNHx</span>
<svg class="a" style="left:415px;top:270px" width="980" height="570" viewBox="415 270 980 570" fill="none" ><circle cx="426.5" cy="280.5" r="6.9" fill="#fff" stroke="#5a5a5a" stroke-width="3"/><circle cx="903.5" cy="280.5" r="6.9" fill="#fff" stroke="#5a5a5a" stroke-width="3"/><circle cx="1381.5" cy="280.5" r="6.9" fill="#fff" stroke="#5a5a5a" stroke-width="3"/><circle cx="426.5" cy="552.5" r="6.9" fill="#fff" stroke="#5a5a5a" stroke-width="3"/><circle cx="1381.5" cy="552.5" r="6.9" fill="#fff" stroke="#5a5a5a" stroke-width="3"/><circle cx="426.5" cy="825.5" r="6.9" fill="#fff" stroke="#5a5a5a" stroke-width="3"/><circle cx="903.5" cy="825.5" r="6.9" fill="#fff" stroke="#5a5a5a" stroke-width="3"/><circle cx="1381.5" cy="825.5" r="6.9" fill="#fff" stroke="#5a5a5a" stroke-width="3"/></svg>
<div class="cbtn" style="top:279px"></div><div class="cbtn" style="top:336px"></div><div class="cbtn" style="top:393px"></div>
<svg class="a" style="left:1399px;top:279px" width="43" height="157" viewBox="1399 279 43 157" fill="none" ><path d="M1402.5 299.5H1434 M1418.2 283.5V315.5" stroke="#1e8a4c" stroke-width="1.6"/><path d="M1416.3 360.3L1432 344.2Q1434.6 342.2 1435.2 343.6Q1435.8 345 1433.5 348L1420.5 364.3Z" fill="#fff" stroke="#222" stroke-width="1.3" stroke-linejoin="round"/><path d="M1402.2 369.2C1405.5 368.8 1406.2 366.5 1407.2 364C1408.6 360.4 1412.8 359 1416.3 360.4C1420.6 362.2 1421.6 366.2 1419.6 369C1416.6 373.2 1408 373.6 1402.2 369.2Z" fill="#4a86d4" stroke="#2d5fa8" stroke-width="1"/><path d="M1403.6 398.8H1433.4V401.8L1422.4 416.2V429.6H1415V416.2L1403.6 401.8Z" fill="#f2f6f6" stroke="#1f1f1f" stroke-width="1.7" stroke-linejoin="miter"/></svg>
<div class="a" style="left:1888px;top:165px;width:30px;height:799px;background:#535353"></div>
<div class="a sb" style="left:1891px;top:165px;width:24px;height:25px"></div>
<div class="a sb" style="left:1891px;top:190px;width:24px;height:51px"></div>
<div class="a sb" style="left:1891px;top:941px;width:24px;height:25px"></div>
<svg class="a" style="left:1891px;top:165px" width="24" height="25" viewBox="1891 165 24 25" fill="none" ><path d="M1897.8 180.5H1908.2L1903 174.8Z" fill="#333"/></svg>
<svg class="a" style="left:1891px;top:941px" width="24" height="25" viewBox="1891 941 24 25" fill="none" ><path d="M1897.8 951H1908.2L1903 956.7Z" fill="#333"/></svg>
<div id="tabbar" class="a"></div>
<div class="a" style="left:2px;top:998px;width:1916px;height:1px;background:#444"></div>
<svg class="a" style="left:28px;top:972px" width="48" height="16" viewBox="28 972 48 16" fill="none" ><path d="M38.3 975.2V985.8L31.8 980.5Z" fill="#9a9a9a"/><path d="M64.8 975.2V985.8L71.3 980.5Z" fill="#b4b4b4"/></svg>
<div class="a" style="left:120px;top:964px;width:85px;height:30px;background:#fff;border-bottom:2px solid #217346"></div>
<span id="t31" class="t " style="left:131.90px;top:969.00px;font-size:20px;color:#217346;font-weight:700;letter-spacing:0.245px;">plant2</span>
<svg class="a" style="left:243px;top:969px" width="24" height="24" viewBox="243 969 24 24" fill="none" ><circle cx="255" cy="980.8" r="10.2" stroke="#fff" stroke-width="1.6"/><path d="M250 980.8H260 M255 975.8V985.8" stroke="#fff" stroke-width="1.8"/></svg>
<div class="a" style="left:1148px;top:973px;width:3px;height:3px;background:#fff;box-shadow:0 6.3px 0 #fff,0 12.6px 0 #fff"></div>
<div class="a" style="left:1168px;top:968px;width:720px;height:25px;background:#535353"></div>
<div class="a sb" style="left:1168px;top:968px;width:25px;height:25px"></div>
<div class="a sb" style="left:1192px;top:968px;width:636px;height:25px"></div>
<div class="a sb" style="left:1864px;top:968px;width:25px;height:25px"></div>
<svg class="a" style="left:1168px;top:968px" width="25" height="25" viewBox="1168 968 25 25" fill="none" ><path d="M1183.8 975.2V985.8L1177.6 980.5Z" fill="#333"/></svg>
<svg class="a" style="left:1864px;top:968px" width="25" height="25" viewBox="1864 968 25 25" fill="none" ><path d="M1873.2 975.2V985.8L1879.4 980.5Z" fill="#333"/></svg>
<div id="status" class="a"></div>
<span id="t32" class="t " style="left:11.50px;top:1009.00px;font-size:14.8px;color:#3b3a39;font-weight:400;letter-spacing:-0.218px;">Ready</span>
<span id="t33" class="t " style="left:156.70px;top:1009.00px;font-size:14.8px;color:#3b3a39;font-weight:400;letter-spacing:0.216px;">Accessibility: Unavailable</span>
<svg class="a" style="left:80px;top:1003px" width="75" height="26" viewBox="80 1003 75 26" fill="none" ><path d="M90.6 1023.3H84V1006.5H104.2V1012.2 M84 1009.5H104.2 M86.6 1012.8H91.4 M86.6 1015.7H89.6 M86.6 1018.6H88.6" stroke="#2b2b2b" stroke-width="1.35"/><circle cx="98" cy="1018.7" r="5.9" stroke="#2b2b2b" stroke-width="1.4"/><circle cx="98" cy="1018.7" r="2.7" fill="#2b2b2b"/><circle cx="139.5" cy="1007.7" r="2.5" stroke="#2b2b2b" stroke-width="1.3"/><path d="M137.2 1010.7L133.6 1008.7Q131.6 1007.9 130.9 1009.4Q130.4 1011 132.2 1011.8L136.4 1013.8V1017L134.2 1022.6Q133.8 1024.6 135.4 1024.7Q136.4 1024.6 137 1023.4L139.5 1019.2L141.6 1022.9 M141.8 1010.7L145.4 1008.7Q147.4 1007.9 148.1 1009.4Q148.6 1011 146.8 1011.8L142.6 1013.8V1015" stroke="#2b2b2b" stroke-width="1.3" stroke-linejoin="round" stroke-linecap="round"/></svg>
<span id="t34" class="t " style="left:144.40px;top:1013.00px;font-size:15px;color:#2b2b2b;font-weight:400;letter-spacing:0.000px;">?</span>
<div class="a" style="left:1456px;top:999px;width:60px;height:32px;background:#a6a6a6"></div>
<svg class="a" style="left:1470px;top:1003px" width="370" height="26" viewBox="1470 1003 370 26" fill="none" ><path d="M1476.4 1005.7H1494.4V1023.2H1476.4Z M1482.4 1005.7V1023.2 M1488.4 1005.7V1023.2 M1476.4 1011.5H1494.4 M1476.4 1017.4H1494.4" stroke="#222" stroke-width="1.5"/><path d="M1536.2 1005.7H1555.4V1023.2H1536.2Z M1540 1009.4H1551.6V1019.6H1540Z M1543 1012.4H1548.6 M1543 1014.6H1548.6 M1543 1016.8H1548.6" stroke="#222" stroke-width="1.4"/><path d="M1596.2 1005.7H1615.4V1023.2H1596.2Z M1602.2 1005.7V1014.2H1596.2 M1602.2 1014.2H1608.8V1005.7" stroke="#222" stroke-width="1.4"/><path d="M1644.6 1014.3H1655" stroke="#444" stroke-width="1.3"/><path d="M1664.2 1014.6H1811.8" stroke="#222" stroke-width="1.6"/><path d="M1820.2 1014.3H1831.2 M1825.7 1008.8V1019.8" stroke="#444" stroke-width="1.3"/><rect x="1734" y="1006" width="7.6" height="16.6" fill="#7f7f7f"/></svg>
<span id="t35" class="t " style="left:1850.70px;top:1008.00px;font-size:15.2px;color:#3b3a39;font-weight:400;letter-spacing:0.320px;">100%</span>
</body></html>
